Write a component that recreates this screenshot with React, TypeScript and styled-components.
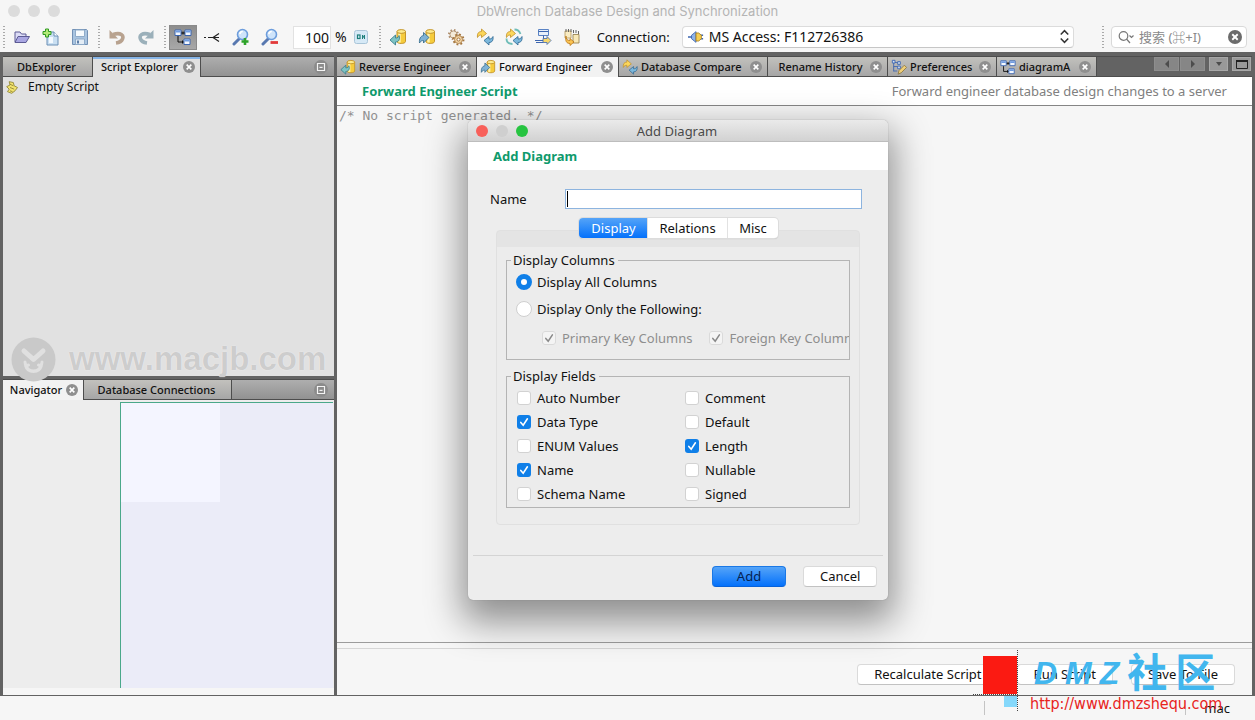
import React, { useState } from "react";
import styled, { createGlobalStyle, css } from "styled-components";

const UI_FONT = '"Noto Sans", "Noto Sans CJK SC", sans-serif';

const Global = createGlobalStyle`
  *, *::before, *::after { box-sizing: border-box; }
  body { margin: 0; background: #f6f6f6; color: #111; font: 13px/16px ${UI_FONT}; }
  button, input, select, textarea { font: inherit; color: inherit; margin: 0; }
  svg { display: block; flex: none; }
`;

/* ---------- window frame ---------- */

const Window = styled.div`
  position: relative;
  display: flex;
  flex-direction: column;
  min-height: 100vh;
  overflow: hidden;
`;

const TitleBar = styled.header`
  display: flex;
  align-items: center;
  height: 22px;
  padding: 0 8px;
`;

const TitleText = styled.h1`
  flex: 1;
  margin: 0;
  padding-right: 52px;
  text-align: center;
  font: 400 13px/22px Inter, sans-serif;
  color: #b4b4b4;
`;

const Lights = styled.div`
  display: flex;
  gap: 8px;
`;

const Light = styled.span<{ $color: string }>`
  width: 12px;
  height: 12px;
  border-radius: 50%;
  background: ${(p) => p.$color};
`;

/* ---------- tool bar ---------- */

const ToolBar = styled.div`
  display: flex;
  align-items: center;
  height: 30px;
  padding: 0 8px 0 3px;
`;

const Grip = styled.span`
  width: 2px;
  height: 22px;
  margin: 0 3px 0 4px;
  background: repeating-linear-gradient(#a9a9a9 0 1px, transparent 1px 3px);
  &:first-child { margin-left: 0; }
`;

const ToolGroup = styled.div`
  display: flex;
  gap: 1px;
`;

const ToolButton = styled.button<{ $pressed?: boolean }>`
  display: flex;
  align-items: center;
  justify-content: center;
  width: 28px;
  height: 25px;
  padding: 0;
  border: 1px solid ${(p) => (p.$pressed ? "#8a8a8a" : "transparent")};
  background: ${(p) => (p.$pressed ? "linear-gradient(#8d8d8d, #a8a8a8)" : "transparent")};
`;

const ZoomField = styled.label`
  display: flex;
  align-items: center;
  gap: 4px;
  margin-left: 9px;
  font-size: 14px;
`;

const ZoomInput = styled.input`
  width: 38px;
  height: 23px;
  padding: 0 1px;
  border: 1px solid #e2e2e2;
  background: #fff;
  text-align: right;
`;

const Connection = styled.label`
  display: flex;
  flex: 1;
  align-items: center;
  gap: 12px;
  margin: 0 24px 0 11px;
`;

const ComboWrap = styled.span`
  position: relative;
  display: flex;
  flex: 1;
  svg { position: absolute; pointer-events: none; top: 3px; }
  svg:first-child { left: 6px; }
  svg:last-child { right: 2px; }
`;

const Combo = styled.select`
  flex: 1;
  height: 22px;
  padding: 0 24px 0 26px;
  border: 1px solid #dcdcdc;
  border-bottom-color: #c6c6c6;
  border-radius: 4px;
  background: #fff;
  font-size: 14px;
  appearance: none;
`;

const SearchBox = styled.label`
  display: flex;
  align-items: center;
  width: 136px;
  height: 22px;
  margin-left: 4px;
  padding: 0 4px 0 6px;
  border: 1px solid #d9d9d9;
  border-radius: 4px;
  background: #fff;
`;

const SearchInput = styled.input`
  flex: 1;
  min-width: 0;
  padding: 0 0 0 4px;
  border: 0;
  outline: 0;
  background: none;
  &::placeholder { color: #8a8a8a; opacity: 1; }
`;

const BareButton = styled.button`
  display: flex;
  padding: 0;
  border: 0;
  background: none;
`;

/* ---------- docked panes ---------- */

const Workspace = styled.main`
  display: grid;
  flex: 1;
  grid-template-columns: 331px minmax(0, 1fr);
  gap: 3px;
  padding: 4px 3px 1px;
  background: #636363;
`;

const LeftColumn = styled.div`
  display: grid;
  grid-template-rows: minmax(0, 320fr) minmax(0, 316fr);
  gap: 3px;
`;

const Pane = styled.section`
  display: flex;
  flex-direction: column;
  min-height: 0;
`;

const TabStrip = styled.div<{ $dark?: boolean }>`
  display: flex;
  align-items: stretch;
  height: 21px;
  border-top: 1px solid #4d4d4d;
  border-bottom: 1px solid #4d4d4d;
  background: ${(p) => (p.$dark ? "#636363" : "linear-gradient(#aeaeae, #929292)")};
`;

const Tab = styled.div<{ $active?: boolean; $accent?: boolean; $width: number; $surface?: string }>`
  display: flex;
  align-items: center;
  justify-content: space-between;
  width: ${(p) => p.$width}px;
  padding: 0 5px 0 3px;
  border-right: 1px solid #4d4d4d;
  background: linear-gradient(#c2c1bd, #a6a6a6);
  ${(p) =>
    p.$active &&
    css`
      margin-bottom: -1px;
      background: ${p.$surface ?? "#f2f2f2"};
    `}
  ${(p) => p.$accent && "box-shadow: inset 0 2px #86b4e6;"}
`;

const TabLabel = styled.button<{ $centered: boolean }>`
  display: flex;
  flex: 1;
  align-items: center;
  justify-content: ${(p) => (p.$centered ? "center" : "flex-start")};
  gap: 3px;
  padding: 0;
  border: 0;
  background: none;
  font-size: 11px;
  font-weight: 500;
  white-space: nowrap;
`;

const StripEnd = styled.div<{ $top?: boolean }>`
  display: flex;
  align-items: ${(p) => (p.$top ? "flex-start" : "center")};
  gap: 4px;
  margin-left: auto;
  padding-right: ${(p) => (p.$top ? 1 : 6)}px;
`;

const ScriptTree = styled.div`
  flex: 1;
  padding: 2px;
  background: #e1e1e1;
`;

const TreeItem = styled.div`
  display: flex;
  align-items: center;
  gap: 8px;
  font-size: 12px;
`;

const Navigator = styled.div`
  flex: 1;
  padding: 2px 1px 7px 117px;
  background: linear-gradient(#f6f6f6, #f6f6f6) bottom / 100% 7px no-repeat, #ededed;
`;

const NavCanvas = styled.div`
  height: 100%;
  border: solid #4aa88a;
  border-width: 1px 0 0 1px;
  background: #ebecf8;
`;

const NavView = styled.div`
  width: 99px;
  height: 99px;
  background: #f4f5ff;
`;

const ScrollPair = styled.div`
  display: flex;
  gap: 1px;
`;

const StripButton = styled.button<{ $width: number; $lit?: boolean }>`
  display: flex;
  align-items: center;
  justify-content: center;
  width: ${(p) => p.$width}px;
  height: 14px;
  padding: 0;
  border: 1px solid ${(p) => (p.$lit ? "#a8a8a8" : "#8e8e8e")};
  background: ${(p) => (p.$lit ? "#999" : "#868686")};
`;

const PageHeader = styled.div`
  display: flex;
  align-items: center;
  justify-content: space-between;
  height: 29px;
  padding: 0 25px;
  border-bottom: 1px solid #858585;
  background: #fff;
  color: #808080;
`;

const GreenHeading = styled.h2`
  margin: 0;
  font-size: 13px;
  line-height: 16px;
  font-weight: 700;
  color: #0f9a6c;
`;

const ScriptArea = styled.textarea`
  flex: 1;
  padding: 1px 2px;
  border: 0;
  border-bottom: 1px solid #9c9c9c;
  outline: 0;
  resize: none;
  background: #f6f6f6;
  color: #909090;
  font: 13px/17px "DejaVu Sans Mono", monospace;
`;

const PageFooter = styled.div`
  display: flex;
  justify-content: flex-end;
  gap: 18px;
  margin-top: 5px;
  padding: 15px 17px 10px;
  border-top: 1px solid #d6d6d6;
`;

const EditorBody = styled.div`
  display: flex;
  flex: 1;
  flex-direction: column;
  background: #f6f6f6;
`;

const PushButton = styled.button<{ $primary?: boolean; $width?: number }>`
  height: 21px;
  width: ${(p) => (p.$width ? p.$width + "px" : "auto")};
  padding: 0 16px;
  border: 1px solid ${(p) => (p.$primary ? "#1a78e6" : "#dadada")};
  border-bottom-color: ${(p) => (p.$primary ? "#0862d8" : "#c2c2c2")};
  border-radius: 4px;
  background: ${(p) => (p.$primary ? "linear-gradient(#55a4f8, #0471fb)" : "#fff")};
  color: ${(p) => (p.$primary ? "#06224f" : "#111")};
  line-height: 17px;
  white-space: nowrap;
`;

const StatusBar = styled.footer`
  display: flex;
  align-items: center;
  justify-content: flex-end;
  height: 24px;
  padding-right: 25px;
`;

const StatusCell = styled.span<{ $width: number }>`
  width: ${(p) => p.$width}px;
  height: 14px;
  border-left: 1px solid #c4c4c4;
  text-align: right;
  line-height: 14px;
`;

/* ---------- dialog ---------- */

const Dialog = styled.div`
  position: absolute;
  left: 468px;
  top: 120px;
  width: 420px;
  border-radius: 5px;
  background: #ededed;
  box-shadow: 0 0 1px #777, 0 16px 36px 6px rgba(0, 0, 0, 0.42);
`;

const DialogTitle = styled.div`
  display: flex;
  align-items: center;
  height: 22px;
  padding: 0 8px;
  border-bottom: 1px solid #bdbdbd;
  border-radius: 5px 5px 0 0;
  background: linear-gradient(#eaeaea, #d2d2d2);
  color: #4a4a4a;
  strong { flex: 1; padding-right: 54px; text-align: center; font: 400 13px/20px ${UI_FONT}; }
`;

const DialogHeader = styled.div`
  height: 28px;
  padding: 6px 25px;
  background: #fff;
`;

const NameRow = styled.label`
  display: flex;
  align-items: center;
  justify-content: space-between;
  padding: 19px 26px 0 22px;
`;

const NameWrap = styled.span`
  position: relative;
  width: 297px;
`;

const NameInput = styled.input`
  display: block;
  width: 100%;
  height: 20px;
  padding: 0 3px;
  border: 1px solid #8db4df;
  outline: 0;
  background: #fff;
`;

const Caret = styled.span`
  position: absolute;
  left: 2px;
  top: 2px;
  width: 1px;
  height: 16px;
  background: #000;
`;

const Segments = styled.div`
  position: relative;
  display: flex;
  width: 199px;
  height: 20px;
  margin: 9px 0 -8px 111px;
  border-radius: 4px;
  background: #fff;
  box-shadow: 0 0 0 1px #dcdcdc, 0 1px 1px #bbb;
`;

const Segment = styled.button<{ $active: boolean; $width: number }>`
  width: ${(p) => p.$width}px;
  padding: 0;
  border: 0;
  border-left: 1px solid ${(p) => (p.$active ? "transparent" : "#e2e2e2")};
  border-radius: ${(p) => (p.$active ? "4px 0 0 4px" : "0")};
  background: ${(p) => (p.$active ? "linear-gradient(#55a4f8, #0471fb) border-box" : "transparent")};
  color: ${(p) => (p.$active ? "#fff" : "#111")};
`;

const TabPanel = styled.div`
  display: flex;
  flex-direction: column;
  gap: 7px;
  height: 295px;
  margin: 0 28px;
  padding: 20px 9px 0;
  border: 1px solid #e0e0e0;
  border-radius: 4px;
  background: linear-gradient(#e4e4e4, #e4e4e4) top / 100% 16px no-repeat, #ececec;
`;

const Group = styled.fieldset<{ $height: number }>`
  height: ${(p) => p.$height}px;
  min-width: 0;
  margin: 0;
  padding: 0 0 0 10px;
  border: 1px solid #b4b4b4;
  overflow: hidden;
  legend { margin-left: -6px; padding: 0 3px 0 2px; line-height: 18px; }
`;

const Option = styled.label<{ $dim?: boolean }>`
  display: flex;
  align-items: center;
  gap: 6px;
  height: 24px;
  white-space: nowrap;
  color: ${(p) => (p.$dim ? "#8e8e8e" : "#111")};
`;

const RadioOption = styled(Option)`
  height: 27px;
  gap: 5px;
`;

const RadioStack = styled.div`
  margin: -1px 0 4px -1px;
`;

const KeyOptions = styled.div`
  display: flex;
  gap: 17px;
  margin-left: 25px;
`;

const FieldGrid = styled.div`
  display: grid;
  grid-template-columns: 168px 1fr;
  margin-top: 1px;
`;

const CheckBox = styled.input`
  appearance: none;
  flex: none;
  width: 14px;
  height: 14px;
  border-radius: 3px;
  background: #fff;
  box-shadow: inset 0 0 0 1px #d2d2d2;
  &:checked {
    background: url("data:image/svg+xml,%3Csvg xmlns='http://www.w3.org/2000/svg' viewBox='0 0 14 14'%3E%3Cpath d='M3.8 7.4l2.4 2.8 4.2-6.4' fill='none' stroke='white' stroke-width='1.6' stroke-linecap='round'/%3E%3C/svg%3E") #0f7fe8;
    box-shadow: none;
  }
  &:disabled {
    background: url("data:image/svg+xml,%3Csvg xmlns='http://www.w3.org/2000/svg' viewBox='0 0 14 14'%3E%3Cpath d='M3.8 7.4l2.4 2.8 4.2-6.4' fill='none' stroke='%23888' stroke-width='1.5' stroke-linecap='round'/%3E%3C/svg%3E") #f4f4f4;
    box-shadow: inset 0 0 0 1px #dadada;
  }
`;

const Radio = styled.input`
  appearance: none;
  flex: none;
  width: 16px;
  height: 16px;
  border: 1px solid #cfcfcf;
  border-radius: 50%;
  background: #fff;
  &:checked { border: 5px solid #0f7fe8; }
`;

const DialogFooter = styled.div`
  display: flex;
  justify-content: flex-end;
  gap: 17px;
  margin: 30px 5px 0;
  padding: 10px 6px 13px;
  border-top: 1px solid #d4d4d4;
`;

/* ---------- overlaid site marks ---------- */

const MacMark = styled.div`
  position: absolute;
  left: 11px;
  top: 336px;
  display: flex;
  align-items: center;
  gap: 13px;
  color: #cdcdcd;
  font: 700 33px/46px "Liberation Sans", sans-serif;
  text-shadow: 0 0 1px #fff;
  pointer-events: none;
`;

const ForumMark = styled.div`
  position: absolute;
  right: 0;
  bottom: 0;
  display: flex;
  width: 282px;
  height: 70px;
  pointer-events: none;
`;

const MarkText = styled.div`
  padding-left: 11px;
`;

const MarkName = styled.div`
  display: flex;
  gap: 8px;
  padding: 3px 0 0 4px;
  height: 45px;
  color: #41b6ee;
  font: italic 700 32px/40px "Liberation Sans", sans-serif;
  b { font: 700 40px/34px "Noto Sans CJK SC", sans-serif; }
`;

const MarkUrl = styled.div`
  color: #e8231c;
  font: 16px/18px "DejaVu Sans Condensed", sans-serif;
`;

/* ---------- icons ---------- */

const Svg = ({ children, size = 18 }: { children: React.ReactNode; size?: number }) => (
  <svg width={size} height={size} viewBox="0 0 18 18" fill="none" aria-hidden="true">
    {children}
  </svg>
);

const FolderIcon = () => (
  <Svg>
    <path d="M2 14V4h5l1.500 2H13v3" fill="#dcdcf6" stroke="#5c5b94" />
    <path d="M2 14.500l3-6h11.500l-3.500 6z" fill="#a9a6e2" stroke="#5c5b94" />
  </Svg>
);
const NewIcon = () => (
  <Svg>
    <path d="M5 4h7l4 4v9H5z" fill="#c9dff2" stroke="#6b8fb5" />
    <path d="M7 9h4v6H7z" fill="#f4faff" />
    <path d="M12 4v4h4" fill="#fff" stroke="#6b8fb5" />
    <path d="M3.500 1h3v2.500H9v3H6.500V9h-3V6.500H1v-3h2.500z" fill="#b4ea78" stroke="#2f9a22" />
  </Svg>
);
const SaveIcon = () => (
  <Svg>
    <path d="M1.500 1.500h14l1 1v14h-15z" fill="#a9c4e0" stroke="#7391b5" />
    <path d="M4.500 2h9v6.500h-9z" fill="#f6fafd" stroke="#8fabc9" />
    <path d="M4.500 11h9v5.500h-9z" fill="#e4edf6" stroke="#8fabc9" />
    <path d="M7 12.500v3" stroke="#5e7fa8" strokeWidth="2" />
  </Svg>
);
const UndoIcon = () => (
  <Svg>
    <path d="M5 6.500c8-2.500 11 1 9.500 4.500-.8 2-3 3.500-6.500 4" stroke="#b8a28f" strokeWidth="3.600" />
    <path d="M1.500 2v8.500H10z" fill="#b8a28f" />
  </Svg>
);
const RedoIcon = () => (
  <Svg>
    <path d="M13 6.500C5 4 2 7.500 3.500 11c.8 2 3 3.500 6.500 4" stroke="#9bb0ba" strokeWidth="3.600" />
    <path d="M16.500 2v8.500H8z" fill="#9bb0ba" />
  </Svg>
);
const DiagramIcon = ({ size = 18 }: { size?: number }) => (
  <Svg size={size}>
    <path d="M7 5h4M4 8v6h6" stroke="#111" />
    <path d="M8 3.500v3M10 3.500v3M8.500 12.500v3" stroke="#111" />
    <path d="M1 2h6v5.500H1zM11 2h6v5.500h-6zM10 11h6v5.500h-6z" fill="#f4f8ff" stroke="#3d66b0" />
    <path d="M1.500 2.500h5v2h-5zM11.500 2.500h5v2h-5zM10.500 11.500h5v2h-5z" fill="#6f9be0" />
  </Svg>
);
const CrowIcon = () => (
  <Svg>
    <path d="M1 9.500h2M5 9.500h11M16 5.500L10 9.500l6 4" stroke="#222" strokeWidth="1.200" />
  </Svg>
);
const Lens = () => (
  <>
    <path d="M7.500 10.500L2 16" stroke="#5878b0" strokeWidth="3" strokeLinecap="round" />
    <circle cx="10.500" cy="6.500" r="5" fill="#cfe4fa" stroke="#6d9ddc" strokeWidth="1.600" />
    <path d="M7.800 6a3 3 0 013-2.500" stroke="#fff" strokeWidth="1.600" />
  </>
);
const ZoomInIcon = () => (
  <Svg>
    <Lens />
    <path d="M13 10v7M9.500 13.500h7" stroke="#2fa32a" strokeWidth="2.600" />
  </Svg>
);
const ZoomOutIcon = () => (
  <Svg>
    <Lens />
    <path d="M9.500 14.500h7.500" stroke="#e23a3a" strokeWidth="2.800" />
  </Svg>
);
const Cylinder = () => (
  <>
    <path d="M8 3.500v10c0 2.600 8.500 2.600 8.500 0v-10z" fill="#f6cc3c" stroke="#c4952a" />
    <path d="M10.500 5v9.500" stroke="#fff3b0" strokeWidth="2.400" />
    <ellipse cx="12.250" cy="3.500" rx="4.250" ry="1.900" fill="#fdeb8f" stroke="#c4952a" />
  </>
);
const ReverseIcon = ({ size = 18 }: { size?: number }) => (
  <Svg size={size}>
    <Cylinder />
    <path d="M1 12l5.500-5v3c1.800 0 3-.5 3.500-2.500 1.500 4-.5 6.500-3.500 6.500v3z" fill="#7fc4c4" stroke="#2d7686" strokeWidth=".8" />
  </Svg>
);
const ForwardIcon = ({ size = 18 }: { size?: number }) => (
  <Svg size={size}>
    <Cylinder />
    <path d="M11 9.500L5.500 4.500v3C2.500 8 1 11 1.500 15 2.500 13 4 12.500 5.500 12.500v2.500z" fill="#7fb2d6" stroke="#2d6686" strokeWidth=".8" />
  </Svg>
);
const GearsIcon = () => (
  <Svg>
    <circle cx="6.500" cy="6.500" r="4.500" stroke="#b09070" strokeWidth="2" strokeDasharray="1.500 2.030" />
    <circle cx="6.500" cy="6.500" r="3.600" fill="#f3ead9" stroke="#a5835e" strokeWidth=".8" />
    <circle cx="11.500" cy="11.500" r="5" stroke="#a5763f" strokeWidth="2" strokeDasharray="1.800 2.120" />
    <circle cx="11.500" cy="11.500" r="4" fill="#f0d3a4" stroke="#a5763f" strokeWidth=".8" />
    <circle cx="11.500" cy="11.500" r="1.500" fill="#fff" stroke="#a5763f" />
  </Svg>
);
const SwapArrows = () => (
  <>
    <path d="M1.500 9.500C1 5.500 2.500 3.500 5.500 3.500V1L10.500 5.500 5.500 9.500V7C3.800 7 2.500 7.500 1.500 9.500z" fill="#fbd65c" stroke="#c0902a" strokeWidth=".8" />
    <path d="M17 8.500c.5 4-1 6-4 6v2.500L8 12.500 13 8.500V11c1.700 0 3-.5 4-2.500z" fill="#7cb8dc" stroke="#2b6490" strokeWidth=".8" />
  </>
);
const SyncIcon = ({ size = 18 }: { size?: number }) => <Svg size={size}><SwapArrows /></Svg>;
const SyncServerIcon = () => (
  <Svg>
    <path d="M1.500 10.500c0 3 1.500 5.500 6 5.500M9.500 1.500c3 0 5 1.500 6 4.500" stroke="#6fbdb8" strokeWidth="1.800" />
    <SwapArrows />
  </Svg>
);
const ExportIcon = () => (
  <Svg>
    <path d="M4.500 1.500h10v6h-10z" fill="#e8f0fb" stroke="#5a83c4" />
    <path d="M4.500 3.500h10M9.500 7.500v3" stroke="#3d66b0" />
    <path d="M1 12.500h8M9 14.500H2" stroke="#3d66b0" />
    <path d="M9 10.500h4v-2l4 4-4 4v-2H9z" fill="#f6d76c" stroke="#3d66b0" strokeWidth=".8" />
  </Svg>
);
const CopyIcon = () => (
  <Svg>
    <path d="M2 3h6v7H2z" fill="#f9ecc4" stroke="#b99a56" strokeWidth=".8" />
    <path d="M3 1v3M5.500 1v3M8 1v3M10.500 2v3M13 2v3M15.500 3v3" stroke="#666" />
    <path d="M10 6.500h6V15h-6z" fill="#f9e9b8" stroke="#8f7a45" strokeWidth=".8" />
    <path d="M3 8c0 3 1 4.500 4 4.500v-2l4 3.500-4 3.500v-2C3.500 15.500 2 13 3 8z" fill="#fbc453" stroke="#b77314" strokeWidth=".8" />
  </Svg>
);
const PlugIcon = () => (
  <Svg size={16}>
    <path d="M0 9h5M13 7h4M13 11h4" stroke="#3d66b0" strokeWidth="1.500" />
    <path d="M9 3L4 7v4l5 4z" fill="#8fb4ea" stroke="#3d66b0" />
    <path d="M9 4.500h3l3 2.500v4l-3 2.500H9z" fill="#f6cf56" stroke="#a9821e" />
  </Svg>
);
const ScriptIcon = () => (
  <Svg size={15}>
    <path d="M5 2l5 1 1 4 4 2-3 4-4 3-5-2 2-3-3-3 4-2z" fill="#f2e36e" stroke="#8c8130" />
    <path d="M6 5l4 2M6 9l5 2M6 13l3 1" stroke="#8c8130" />
  </Svg>
);
const PrefsIcon = () => (
  <Svg size={16}>
    <path d="M3 2v12M3 4h5M3 8.500h5M3 13.500h4" stroke="#3d66b0" />
    <path d="M1.500 1.500h3v3h-3zM7.500 3h3v3h-3zM7.500 8h3v3h-3z" fill="#cfe0f8" stroke="#3d66b0" />
    <path d="M8 17l1-4 6-6 2.500 2.500-6 6z" fill="#f0cf78" stroke="#8f7a45" />
  </Svg>
);
const CloseDot = ({ fill = "#8f8f8f", size = 12 }: { fill?: string; size?: number }) => (
  <Svg size={size}>
    <circle cx="9" cy="9" r="9" fill={fill} />
    <path d="M5.500 5.500l7 7M12.500 5.500l-7 7" stroke="#fff" strokeWidth="2.400" />
  </Svg>
);
const MinimizeIcon = () => (
  <Svg size={14}>
    <circle cx="9" cy="9" r="9" fill="#8b8b8b" />
    <path d="M4.500 4.500h9v9h-9z" stroke="#f4f4f4" strokeWidth="1.500" />
    <path d="M7 9.500h4" stroke="#f4f4f4" strokeWidth="1.500" />
  </Svg>
);
const Triangle = ({ d }: { d: string }) => (
  <svg width="8" height="8" viewBox="0 0 8 8" aria-hidden="true">
    <path d={d} fill="#4c4c4c" />
  </svg>
);

/* ---------- pieces ---------- */

const Tool = ({ name, icon, pressed }: { name: string; icon: React.ReactNode; pressed?: boolean }) => (
  <ToolButton type="button" aria-label={name} aria-pressed={pressed} $pressed={pressed}>
    {icon}
  </ToolButton>
);

type TabSpec = {
  label: string;
  width: number;
  icon?: React.ReactNode;
  active?: boolean;
  closable?: boolean;
  accent?: boolean;
  surface?: string;
};

const DockTab = ({ label, width, icon, active, closable, accent, surface }: TabSpec) => (
  <Tab $width={width} $active={active} $accent={accent} $surface={surface}>
    <TabLabel type="button" $centered={!icon}>
      {icon}
      {label}
    </TabLabel>
    {closable && (
      <BareButton type="button" aria-label={`Close ${label}`}>
        <CloseDot />
      </BareButton>
    )}
  </Tab>
);

const EDITOR_TABS: TabSpec[] = [
  { label: "Reverse Engineer", width: 140, icon: <ReverseIcon size={16} />, closable: true },
  { label: "Forward Engineer", width: 142, icon: <ForwardIcon size={16} />, closable: true, active: true },
  { label: "Database Compare", width: 149, icon: <SyncIcon size={16} />, closable: true },
  { label: "Rename History", width: 120, closable: true },
  { label: "Preferences", width: 109, icon: <PrefsIcon />, closable: true },
  { label: "diagramA", width: 100, icon: <DiagramIcon size={16} />, closable: true },
];

const FIELDS: [string, boolean][] = [
  ["Auto Number", false],
  ["Comment", false],
  ["Data Type", true],
  ["Default", false],
  ["ENUM Values", false],
  ["Length", true],
  ["Name", true],
  ["Nullable", false],
  ["Schema Name", false],
  ["Signed", false],
];

const SEGMENTS: [string, number][] = [
  ["Display", 68],
  ["Relations", 80],
  ["Misc", 51],
];

function AddDiagramDialog() {
  const [segment, setSegment] = useState("Display");
  return (
    <Dialog role="dialog" aria-label="Add Diagram">
      <DialogTitle>
        <Lights>
          <Light $color="#f8605a" />
          <Light $color="#cfcfcf" />
          <Light $color="#27c441" />
        </Lights>
        <strong>Add Diagram</strong>
      </DialogTitle>
      <DialogHeader>
        <GreenHeading>Add Diagram</GreenHeading>
      </DialogHeader>
      <NameRow>
        Name
        <NameWrap>
          <NameInput type="text" />
          <Caret />
        </NameWrap>
      </NameRow>
      <Segments>
        {SEGMENTS.map(([label, width]) => (
          <Segment key={label} type="button" $width={width} $active={segment === label} onClick={() => setSegment(label)}>
            {label}
          </Segment>
        ))}
      </Segments>
      <TabPanel>
        <Group $height={109}>
          <legend>Display Columns</legend>
          <RadioStack>
            <RadioOption>
              <Radio type="radio" name="columns" defaultChecked />
              Display All Columns
            </RadioOption>
            <RadioOption>
              <Radio type="radio" name="columns" />
              Display Only the Following:
            </RadioOption>
          </RadioStack>
          <KeyOptions>
            <Option $dim>
              <CheckBox type="checkbox" defaultChecked disabled />
              Primary Key Columns
            </Option>
            <Option $dim>
              <CheckBox type="checkbox" defaultChecked disabled />
              Foreign Key Columns
            </Option>
          </KeyOptions>
        </Group>
        <Group $height={141}>
          <legend>Display Fields</legend>
          <FieldGrid>
            {FIELDS.map(([label, on]) => (
              <Option key={label}>
                <CheckBox type="checkbox" defaultChecked={on} />
                {label}
              </Option>
            ))}
          </FieldGrid>
        </Group>
      </TabPanel>
      <DialogFooter>
        <PushButton type="button" $primary $width={74}>Add</PushButton>
        <PushButton type="button" $width={74}>Cancel</PushButton>
      </DialogFooter>
    </Dialog>
  );
}

export default function App() {
  return (
    <Window>
      <Global />
      <TitleBar>
        <Lights>
          <Light $color="#dcdcdc" />
          <Light $color="#dcdcdc" />
          <Light $color="#dcdcdc" />
        </Lights>
        <TitleText>DbWrench Database Design and Synchronization</TitleText>
      </TitleBar>

      <ToolBar>
        <Grip />
        <ToolGroup>
          <Tool name="Open" icon={<FolderIcon />} />
          <Tool name="New" icon={<NewIcon />} />
          <Tool name="Save" icon={<SaveIcon />} />
        </ToolGroup>
        <Grip />
        <ToolGroup>
          <Tool name="Undo" icon={<UndoIcon />} />
          <Tool name="Redo" icon={<RedoIcon />} />
        </ToolGroup>
        <Grip />
        <ToolGroup>
          <Tool name="Diagram" icon={<DiagramIcon />} pressed />
          <Tool name="Relation" icon={<CrowIcon />} />
          <Tool name="Zoom in" icon={<ZoomInIcon />} />
          <Tool name="Zoom out" icon={<ZoomOutIcon />} />
        </ToolGroup>
        <ZoomField>
          <ZoomInput type="text" defaultValue="100" /> %
        </ZoomField>
        <Tool
          name="Auto layout"
          icon={
            <svg width="14" height="14" viewBox="0 0 14 14" fill="none">
              <rect x=".5" y=".5" width="13" height="13" rx="2" fill="#d6e9f6" stroke="#a9c5d8" />
              <rect x="3.500" y="5" width="2.500" height="3.500" stroke="#1d7f7a" strokeWidth="1.200" />
              <path d="M8.500 9V5M8.500 5l2 3.500M10.500 9V5" stroke="#1d7f7a" />
            </svg>
          }
        />
        <Grip />
        <ToolGroup>
          <Tool name="Reverse engineer" icon={<ReverseIcon />} />
          <Tool name="Forward engineer" icon={<ForwardIcon />} />
          <Tool name="Settings" icon={<GearsIcon />} />
          <Tool name="Compare" icon={<SyncIcon />} />
          <Tool name="Compare servers" icon={<SyncServerIcon />} />
          <Tool name="Export" icon={<ExportIcon />} />
          <Tool name="Copy tables" icon={<CopyIcon />} />
        </ToolGroup>
        <Connection>
          Connection:
          <ComboWrap>
            <PlugIcon />
            <Combo>
              <option>MS Access: F112726386</option>
            </Combo>
            <Svg size={15}>
              <path d="M4.500 6.500L9 2l4.500 4.500M4.500 11.500L9 16l4.500-4.500" stroke="#333" strokeWidth="1.800" />
            </Svg>
          </ComboWrap>
        </Connection>
        <Grip />
        <SearchBox>
          <svg width="17" height="14" viewBox="0 0 17 14" fill="none" stroke="#777" strokeWidth="1.200">
            <circle cx="5.500" cy="6" r="4.300" />
            <path d="M8.500 9l3.500 4M11.500 5.500l2 2 2-2" />
          </svg>
          <SearchInput type="text" placeholder="搜索 (⌘+I)" />
          <BareButton type="button" aria-label="Clear">
            <CloseDot fill="#6b6b6b" size={14} />
          </BareButton>
        </SearchBox>
      </ToolBar>

      <Workspace>
        <LeftColumn>
          <Pane>
            <TabStrip>
              <DockTab label="DbExplorer" width={90} />
              <DockTab label="Script Explorer" width={108} active closable accent surface="#e1e1e1" />
              <StripEnd>
                <BareButton type="button" aria-label="Minimize"><MinimizeIcon /></BareButton>
              </StripEnd>
            </TabStrip>
            <ScriptTree>
              <TreeItem>
                <ScriptIcon />
                Empty Script
              </TreeItem>
            </ScriptTree>
          </Pane>
          <Pane>
            <TabStrip>
              <DockTab label="Navigator" width={81} active closable />
              <DockTab label="Database Connections" width={148} />
              <StripEnd>
                <BareButton type="button" aria-label="Minimize"><MinimizeIcon /></BareButton>
              </StripEnd>
            </TabStrip>
            <Navigator>
              <NavCanvas>
                <NavView />
              </NavCanvas>
            </Navigator>
          </Pane>
        </LeftColumn>

        <Pane>
          <TabStrip $dark>
            {EDITOR_TABS.map((tab) => (
              <DockTab key={tab.label} {...tab} />
            ))}
            <StripEnd $top>
              <ScrollPair>
                <StripButton type="button" aria-label="Previous" $width={25}><Triangle d="M6 0v8L2 4z" /></StripButton>
                <StripButton type="button" aria-label="Next" $width={25}><Triangle d="M2 0v8l4-4z" /></StripButton>
              </ScrollPair>
              <StripButton type="button" aria-label="List" $width={19} $lit><Triangle d="M1 2h6L4 6z" /></StripButton>
              <StripButton type="button" aria-label="Maximize" $width={19} $lit>
                <svg width="12" height="9" viewBox="0 0 12 9" aria-hidden="true">
                  <path d="M.5 1h11v7.500H.5z" fill="none" stroke="#222" />
                  <path d="M0 1h12" stroke="#222" strokeWidth="2" />
                </svg>
              </StripButton>
            </StripEnd>
          </TabStrip>
          <EditorBody>
            <PageHeader>
              <GreenHeading>Forward Engineer Script</GreenHeading>
              <span>Forward engineer database design changes to a server</span>
            </PageHeader>
            <ScriptArea aria-label="Script" defaultValue="/* No script generated. */" />
            <PageFooter>
              <PushButton type="button">Recalculate Script</PushButton>
              <PushButton type="button">Run Script</PushButton>
              <PushButton type="button">Save To File</PushButton>
            </PageFooter>
          </EditorBody>
        </Pane>
      </Workspace>

      <StatusBar>
        <StatusCell $width={201} />
        <StatusCell $width={45}>mac</StatusCell>
      </StatusBar>

      <AddDiagramDialog />

      <MacMark>
        <svg width="45" height="45" viewBox="0 0 45 45" fill="none" aria-hidden="true">
          <circle cx="22.500" cy="22.500" r="22" fill="#c9c9c9" />
          <path d="M13 14l9.500 8.500L32 14" stroke="#e0e0e0" strokeWidth="5" strokeLinecap="round" strokeLinejoin="round" />
          <path d="M14 25c0 3 2 4 3.500 3M31 25c0 3-2 4-3.500 3" stroke="#e0e0e0" strokeWidth="3" strokeLinecap="round" />
          <path d="M15 29c2 7 13 7 15 0" stroke="#e0e0e0" strokeWidth="3.500" strokeLinecap="round" />
        </svg>
        <span>www.macjb.com</span>
      </MacMark>

      <ForumMark>
        <svg width="46" height="70" viewBox="0 0 46 70" aria-hidden="true">
          <path d="M10 6h34v38H10z" fill="#fb1a12" />
          <path d="M31 46h13v11H31z" fill="#85d8fb" />
          <path d="M44.500 0v61M0 44.500h44" stroke="#444" strokeDasharray="1 1" />
        </svg>
        <MarkText>
          <MarkName>
            <span>D</span>
            <span>M</span>
            <span>Z</span>
            <b>社</b>
            <b>区</b>
          </MarkName>
          <MarkUrl>http://www.dmzshequ.com</MarkUrl>
        </MarkText>
      </ForumMark>
    </Window>
  );
}
